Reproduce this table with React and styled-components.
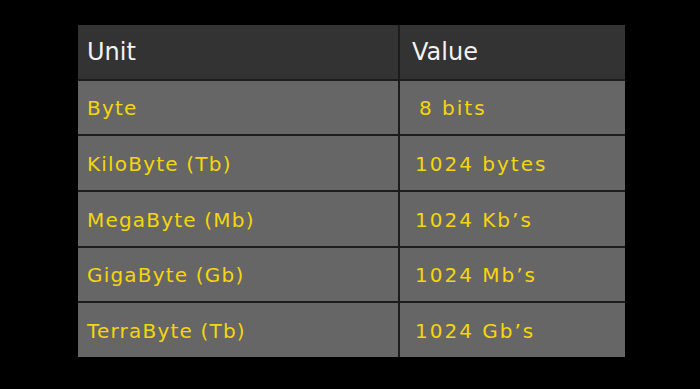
import React from 'react'
import styled, { createGlobalStyle } from 'styled-components'

const rows = [
  ['Byte', '8 bits'],
  ['KiloByte (Tb)', '1024 bytes'],
  ['MegaByte (Mb)', '1024 Kb’s'],
  ['GigaByte (Gb)', '1024 Mb’s'],
  ['TerraByte (Tb)', '1024 Gb’s']
]

export default () => (
  <Page>
    <Global />
    <Table>
      <HeadCell>Unit</HeadCell>
      <HeadCell $value>Value</HeadCell>
      {rows.map(([unit, value], i) => (
        <React.Fragment key={unit}>
          <Cell>{unit}</Cell>
          <Cell $value $indent={i === 0}>{value}</Cell>
        </React.Fragment>
      ))}
    </Table>
  </Page>
)

const Global = createGlobalStyle`
  html, body {
    margin: 0;
    background: #000;
  }
`

const Page = styled.div`
  width: 700px;
  height: 389px;
  padding: 25px 0 0 78px;
  box-sizing: border-box;
  background: #000;
  font-family: "DejaVu Sans", sans-serif;
`

const Table = styled.div`
  display: grid;
  grid-template-columns: 320px 225px;
  grid-auto-rows: 1fr;
  gap: 2px;
  width: 547px;
  height: 332px;
  background: #1c1c1c;
`

const HeadCell = styled.div`
  display: flex;
  align-items: center;
  padding-left: ${p => (p.$value ? '12px' : '9px')};
  background: #333333;
  color: #f2f2f2;
  font-size: 24px;
  white-space: pre;
`

const Cell = styled.div`
  display: flex;
  align-items: center;
  padding-left: ${p => (p.$indent ? '19px' : p.$value ? '15px' : '9px')};
  padding-top: 2px;
  background: #666666;
  color: #f4d60c;
  font-size: 20px;
  letter-spacing: ${p => (p.$value ? '2px' : '1.2px')};
  white-space: pre;
`
